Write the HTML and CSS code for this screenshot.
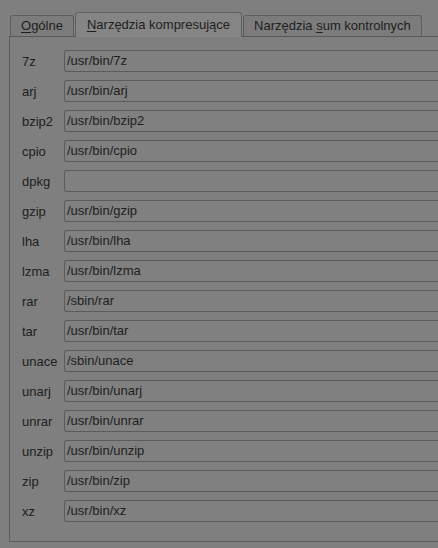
FILE: index.html
```html
<!DOCTYPE html>
<html lang="pl">
<head>
    <meta charset="UTF-8">
    <title>Narzędzia kompresujące</title>
    <link rel="stylesheet" href="styles.css">
</head>
<body>
    <div class="tabs">
        <div class="tab"><u>O</u>gólne</div>
        <div class="tab active"><u>N</u>arzędzia kompresujące</div>
        <div class="tab">Narzędzia <u>s</u>um kontrolnych</div>
    </div>
    <div class="panel">
        <div class="row"><span class="label">7z</span><div class="field">/usr/bin/7z</div></div>
        <div class="row"><span class="label">arj</span><div class="field">/usr/bin/arj</div></div>
        <div class="row"><span class="label">bzip2</span><div class="field">/usr/bin/bzip2</div></div>
        <div class="row"><span class="label">cpio</span><div class="field">/usr/bin/cpio</div></div>
        <div class="row"><span class="label">dpkg</span><div class="field"></div></div>
        <div class="row"><span class="label">gzip</span><div class="field">/usr/bin/gzip</div></div>
        <div class="row"><span class="label">lha</span><div class="field">/usr/bin/lha</div></div>
        <div class="row"><span class="label">lzma</span><div class="field">/usr/bin/lzma</div></div>
        <div class="row"><span class="label">rar</span><div class="field">/sbin/rar</div></div>
        <div class="row"><span class="label">tar</span><div class="field">/usr/bin/tar</div></div>
        <div class="row"><span class="label">unace</span><div class="field">/sbin/unace</div></div>
        <div class="row"><span class="label">unarj</span><div class="field">/usr/bin/unarj</div></div>
        <div class="row"><span class="label">unrar</span><div class="field">/usr/bin/unrar</div></div>
        <div class="row"><span class="label">unzip</span><div class="field">/usr/bin/unzip</div></div>
        <div class="row"><span class="label">zip</span><div class="field">/usr/bin/zip</div></div>
        <div class="row"><span class="label">xz</span><div class="field">/usr/bin/xz</div></div>
    </div>
</body>
</html>
```

FILE: styles.css
```css
body {
    margin: 0;
    background-color: #7f7f7f;
    color: #1e1e1e;
    font-family: 'Liberation Sans', Arial, sans-serif;
    font-size: 13px;
    overflow: hidden;
}

.tabs {
    display: flex;
    align-items: flex-end;
    padding: 12px 0 0 10px;
    height: 24px;
}

.tab {
    height: 20px;
    line-height: 20px;
    padding: 0 10px;
    border: 1px solid #5e5e5e;
    border-bottom: none;
    border-radius: 3px 3px 0 0;
    background-color: #7c7c7c;
    white-space: nowrap;
}

.tab + .tab {
    margin-left: 1px;
}

.tab.active {
    height: 24px;
    line-height: 23px;
    padding: 0 11px;
    background-color: #858585;
    position: relative;
    z-index: 1;
    margin-bottom: -1px;
    border-color: #626262;
}

.tab u {
    text-decoration-thickness: 1px;
    text-underline-offset: 2px;
}

.panel {
    margin-left: 9px;
    border: 1px solid #5e5e5e;
    border-right: none;
    border-top-color: #585858;
    padding: 13px 0 19px 12px;
    display: flex;
    flex-direction: column;
    gap: 8px;
}

.row {
    display: flex;
    align-items: center;
}

.label {
    width: 42px;
    flex-shrink: 0;
}

.field {
    flex: 1;
    height: 20px;
    line-height: 20px;
    border: 1px solid #5c5c5c;
    border-right: none;
    border-radius: 3px 0 0 3px;
    padding-left: 2px;
    background-color: #808080;
}
```
